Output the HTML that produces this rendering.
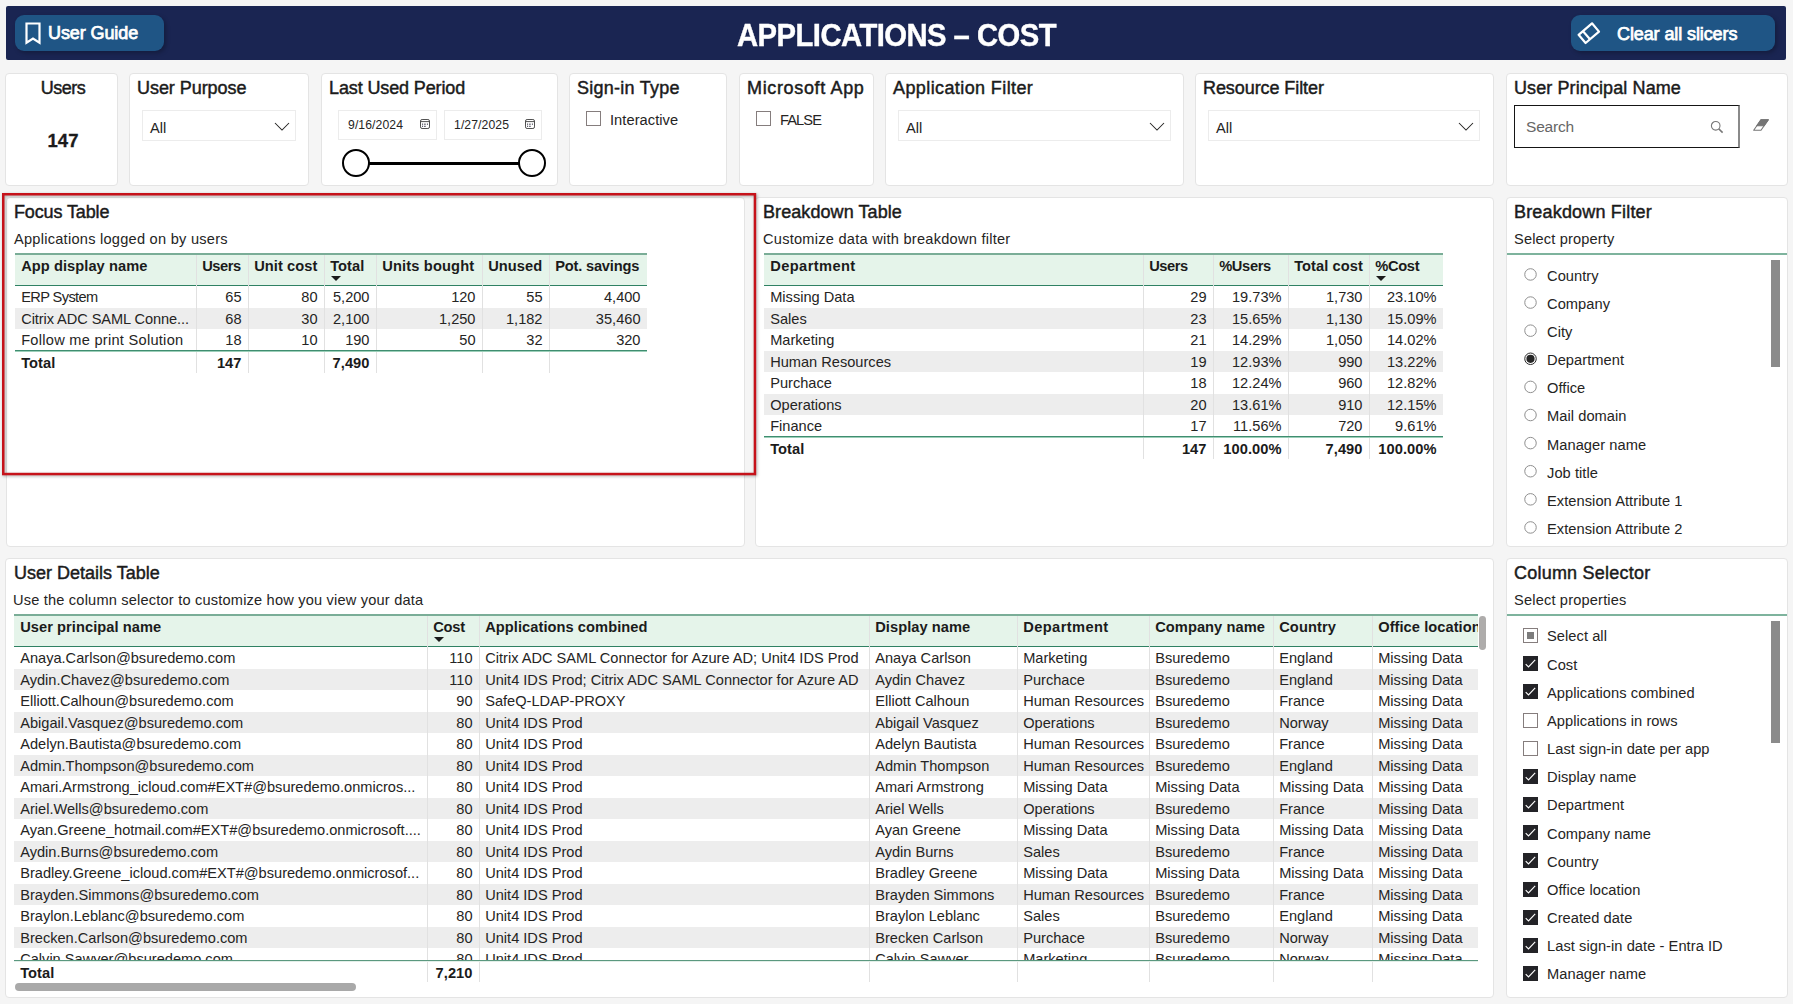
<!DOCTYPE html>
<html lang="en"><head><meta charset="utf-8"><title>Applications – Cost</title>
<style>
*{box-sizing:border-box;margin:0;padding:0}
html,body{width:1793px;height:1004px;overflow:hidden;background:#f5f5f5;font-family:"Liberation Sans",sans-serif;color:#252423}
.abs{position:absolute}
.card{position:absolute;background:#fff;border:1px solid #e4e4e4;border-radius:4px}
.hdr{position:absolute;left:6px;top:6px;width:1780px;height:54px;background:#1a2552;border-radius:2px}
.btn{position:absolute;top:15px;height:36px;background:#1f5585;border-radius:9px;box-shadow:2px 2px 4px rgba(0,0,0,.25);color:#fff}
.ttl{position:absolute;font-size:18px;color:#1b1b1b;white-space:nowrap;-webkit-text-stroke:.45px #1b1b1b;letter-spacing:.05px}
.sub{position:absolute;font-size:14.6px;color:#252423;white-space:nowrap;letter-spacing:.15px}
.dd{position:absolute;border:1px solid #ececec;background:#fff;height:31px}
.dd span{position:absolute;left:7px;top:9px;font-size:14.6px;color:#252423}
.t{position:absolute;white-space:nowrap;overflow:hidden}
.row{position:absolute;left:0;height:21.43px;font-size:14.6px;letter-spacing:0;color:#252423}
.row.alt{background:#ededed}
.c{position:absolute;top:0;height:100%;white-space:nowrap;overflow:hidden;padding:0 6.5px 0 6.2px}
.r{text-align:right}
.th{position:absolute;background:#e5f4ea;border-top:2px solid #7aad97;border-bottom:1px solid #2f8163;font-weight:bold;font-size:14.67px;letter-spacing:.05px;color:#1b1b1b}
.th .c{line-height:19.4px;top:2px}
.vl{position:absolute;width:1px;background:#e1e1e1}
.tot{position:absolute;font-weight:bold;font-size:14.67px;letter-spacing:.05px;border-top:1px solid #3f8d70;box-shadow:inset 0 1px 0 #9ccfb9;color:#1b1b1b}
.tot .c{line-height:24px}
.arr{position:absolute;width:0;height:0;border-left:5px solid transparent;border-right:5px solid transparent;border-top:5px solid #1b1b1b}
.li{position:absolute;font-size:14.67px;line-height:17px;letter-spacing:.05px;color:#252423;white-space:nowrap}
.rad{position:absolute;width:12px;height:12px;border:1px solid #8a8a8a;border-radius:50%;background:#fff}
.rad.on::after{content:"";position:absolute;left:2px;top:2px;width:6px;height:6px;border-radius:50%;background:#1b1b1b}
.rad.on{border-color:#1b1b1b}
.cb{position:absolute;width:15px;height:15px;border:1px solid #857d7d;background:#fff}
.cb.on{background:#232327;border-color:#232327}
.sb{position:absolute;background:#8b8b8b}
</style></head>
<body>
<div class="hdr"></div>
<div class="btn" style="left:15px;width:149px"></div>
<svg class="abs" style="left:24px;top:21px" width="18" height="25" viewBox="0 0 18 25"><path d="M2.5 2.5 H15.5 V21.7 L9 17.6 L2.5 21.7 Z" fill="none" stroke="#fff" stroke-width="2.2"/></svg>
<div class="abs" style="left:48px;top:23px;font-size:18px;color:#fff;-webkit-text-stroke:.75px #fff;letter-spacing:-.1px;white-space:nowrap">User Guide</div>
<div class="abs" style="left:697px;top:17px;width:399px;text-align:center;font-size:31.8px;font-weight:bold;color:#fff;white-space:nowrap;letter-spacing:-.6px;transform:scaleX(.92);-webkit-text-stroke:.4px #fff">APPLICATIONS – COST</div>
<div class="btn" style="left:1571px;width:204px"></div>
<svg class="abs" style="left:1577px;top:21px" width="24" height="24" viewBox="0 0 24 24"><g fill="none" stroke="#fff" stroke-width="2.2" stroke-linejoin="round"><path d="M15 2.3 L22 10.6 L8.6 22 L1.6 13.8 Z"/><path d="M6 10.2 L13 18.3"/></g></svg>
<div class="abs" style="left:1617px;top:24px;font-size:18px;color:#fff;-webkit-text-stroke:.75px #fff;letter-spacing:-.1px;white-space:nowrap">Clear all slicers</div>
<div class="card" style="left:5px;top:73px;width:113px;height:113px"></div>
<div class="card" style="left:129px;top:73px;width:180px;height:113px"></div>
<div class="card" style="left:321px;top:73px;width:237px;height:113px"></div>
<div class="card" style="left:569px;top:73px;width:158px;height:113px"></div>
<div class="card" style="left:739px;top:73px;width:135px;height:113px"></div>
<div class="card" style="left:885px;top:73px;width:299px;height:113px"></div>
<div class="card" style="left:1195px;top:73px;width:299px;height:113px"></div>
<div class="card" style="left:1506px;top:73px;width:282px;height:113px"></div>
<div class="ttl" style="left:7px;width:112px;text-align:center;top:78px;letter-spacing:-.5px">Users</div>
<div class="abs" style="left:7px;width:112px;text-align:center;top:130px;font-size:18.5px;font-weight:bold;color:#1b1b1b;-webkit-text-stroke:.3px #1b1b1b">147</div>
<div class="ttl" style="left:137px;top:78px;letter-spacing:-0.05px">User Purpose</div>
<div class="ttl" style="left:329px;top:78px;letter-spacing:-0.12px">Last Used Period</div>
<div class="ttl" style="left:577px;top:78px;letter-spacing:0.25px">Sign-in Type</div>
<div class="ttl" style="left:747px;top:78px;letter-spacing:0.65px">Microsoft App</div>
<div class="ttl" style="left:893px;top:78px;letter-spacing:0.4px">Application Filter</div>
<div class="ttl" style="left:1203px;top:78px;letter-spacing:-0.08px">Resource Filter</div>
<div class="ttl" style="left:1514px;top:78px;letter-spacing:0.1px">User Principal Name</div>
<div class="dd" style="left:142px;top:110px;width:154px"><span>All</span><svg class="abs" style="right:5px;top:11px" width="16" height="10" viewBox="0 0 16 10"><path d="M1 1 L8 8 L15 1" fill="none" stroke="#252423" stroke-width="1.05"/></svg></div>
<div class="dd" style="left:898px;top:110px;width:273px"><span>All</span><svg class="abs" style="right:5px;top:11px" width="16" height="10" viewBox="0 0 16 10"><path d="M1 1 L8 8 L15 1" fill="none" stroke="#252423" stroke-width="1.05"/></svg></div>
<div class="dd" style="left:1208px;top:110px;width:272px"><span>All</span><svg class="abs" style="right:5px;top:11px" width="16" height="10" viewBox="0 0 16 10"><path d="M1 1 L8 8 L15 1" fill="none" stroke="#252423" stroke-width="1.05"/></svg></div>
<div class="dd" style="left:338px;top:110px;width:99px;height:30px"><span style="left:9px;top:7px;font-size:12.2px;letter-spacing:.1px">9/16/2024</span><svg class="abs" style="right:6px;top:8px" width="10" height="10" viewBox="0 0 10 10"><g fill="none" stroke="#3d3d3d" stroke-width=".9"><rect x=".5" y=".5" width="9" height="9" rx="1.6"/><path d="M.5 2.6H9.5"/></g><g fill="#3a3a4a"><rect x="2" y="4.6" width="1.1" height="1.1"/><rect x="4" y="4.7" width="1.8" height=".9"/><rect x="6.9" y="4.6" width="1.1" height="1.1"/><rect x="2" y="6.7" width="1.1" height="1.1"/><rect x="4" y="6.8" width="1.8" height=".9"/></g></svg></div>
<div class="dd" style="left:444px;top:110px;width:98px;height:30px"><span style="left:9px;top:7px;font-size:12.2px;letter-spacing:.1px">1/27/2025</span><svg class="abs" style="right:6px;top:8px" width="10" height="10" viewBox="0 0 10 10"><g fill="none" stroke="#3d3d3d" stroke-width=".9"><rect x=".5" y=".5" width="9" height="9" rx="1.6"/><path d="M.5 2.6H9.5"/></g><g fill="#3a3a4a"><rect x="2" y="4.6" width="1.1" height="1.1"/><rect x="4" y="4.7" width="1.8" height=".9"/><rect x="6.9" y="4.6" width="1.1" height="1.1"/><rect x="2" y="6.7" width="1.1" height="1.1"/><rect x="4" y="6.8" width="1.8" height=".9"/></g></svg></div>
<div class="abs" style="left:356px;top:161.5px;width:176px;height:3px;background:#000"></div>
<div class="abs" style="left:341.5px;top:149px;width:28px;height:28px;border:2.5px solid #000;border-radius:50%;background:#fff"></div>
<div class="abs" style="left:517.5px;top:149px;width:28px;height:28px;border:2.5px solid #000;border-radius:50%;background:#fff"></div>
<div class="cb" style="left:586px;top:111px"></div><div class="li" style="left:610px;top:112px">Interactive</div>
<div class="cb" style="left:756px;top:111px"></div><div class="li" style="left:780px;top:112px;letter-spacing:-.9px">FALSE</div>
<div class="abs" style="left:1514px;top:105px;width:226px;height:43px;border:1px solid #151515;border-right:2px solid #8a8a8a;background:#fff"></div>
<div class="abs" style="left:1526px;top:118px;font-size:15.5px;color:#666;letter-spacing:-.2px">Search</div>
<svg class="abs" style="left:1710px;top:120px" width="14" height="14" viewBox="0 0 14 14"><g fill="none" stroke="#777" stroke-width="1.1"><circle cx="5.7" cy="5.8" r="4.3"/><path d="M8.8 8.9 L12.6 12.6" stroke-width="1.5"/></g></svg>
<svg class="abs" style="left:1752px;top:118px" width="18" height="14" viewBox="0 0 18 14"><path d="M9 1.8 H16.3 L9 12.2 H1.7 Z" fill="#fff" stroke="#757575" stroke-width="1.1" stroke-linejoin="round"/><path d="M9 1.8 H16.3 L12.1 7.8 H4.8 Z" fill="#757575" stroke="#757575" stroke-width="1.1" stroke-linejoin="round"/></svg>
<div class="card" style="left:6px;top:197px;width:739px;height:350px"></div>
<div class="card" style="left:755px;top:197px;width:739px;height:350px"></div>
<div class="card" style="left:1506px;top:197px;width:282px;height:350px"></div>
<svg class="abs" style="left:0;top:185px;filter:drop-shadow(1px 1.5px 1.5px rgba(0,0,0,.32))" width="770" height="300" viewBox="0 185 770 300"><rect x="3.25" y="194.25" width="751.7" height="279.8" fill="none" stroke="#c6121a" stroke-width="2.5"/></svg>
<div class="ttl" style="left:14px;top:202px;letter-spacing:-0.13px">Focus Table</div>
<div class="sub" style="left:14px;top:231px;letter-spacing:0.25px">Applications logged on by users</div>
<div class="th" style="left:15px;top:253px;width:632px;height:33px"><div class="c" style="left:0px;width:181px">App display name</div><div class="c" style="left:181px;width:52px;letter-spacing:-0.45px">Users</div><div class="c" style="left:233px;width:76px">Unit cost</div><div class="c" style="left:309px;width:52px">Total</div><div class="c" style="left:361px;width:106px;letter-spacing:0.15px">Units bought</div><div class="c" style="left:467px;width:67px">Unused</div><div class="c" style="left:534px;width:98px;letter-spacing:-0.2px">Pot. savings</div></div>
<div class="arr" style="left:331px;top:276px"></div>
<div class="abs" style="left:15px;top:286px;width:632px;height:64px;overflow:hidden"><div class="row" style="top:0px;width:632px;height:22px;line-height:23.4px"><div class="c" style="left:0px;width:181px;letter-spacing:-0.6px">ERP System</div><div class="c r" style="left:181px;width:52px">65</div><div class="c r" style="left:233px;width:76px">80</div><div class="c r" style="left:309px;width:52px">5,200</div><div class="c r" style="left:361px;width:106px">120</div><div class="c r" style="left:467px;width:67px">55</div><div class="c r" style="left:534px;width:98px">4,400</div></div><div class="row alt" style="top:22px;width:632px;height:21px;line-height:23.4px"><div class="c" style="left:0px;width:181px;letter-spacing:-0.08px">Citrix ADC SAML Conne...</div><div class="c r" style="left:181px;width:52px">68</div><div class="c r" style="left:233px;width:76px">30</div><div class="c r" style="left:309px;width:52px">2,100</div><div class="c r" style="left:361px;width:106px">1,250</div><div class="c r" style="left:467px;width:67px">1,182</div><div class="c r" style="left:534px;width:98px">35,460</div></div><div class="row" style="top:43px;width:632px;height:22px;line-height:23.4px"><div class="c" style="left:0px;width:181px;letter-spacing:0.27px">Follow me print Solution</div><div class="c r" style="left:181px;width:52px">18</div><div class="c r" style="left:233px;width:76px">10</div><div class="c r" style="left:309px;width:52px">190</div><div class="c r" style="left:361px;width:106px">50</div><div class="c r" style="left:467px;width:67px">32</div><div class="c r" style="left:534px;width:98px">320</div></div></div>
<div class="vl" style="left:196px;top:255px;height:117.80px"></div>
<div class="vl" style="left:248px;top:255px;height:117.80px"></div>
<div class="vl" style="left:324px;top:255px;height:117.80px"></div>
<div class="vl" style="left:376px;top:255px;height:117.80px"></div>
<div class="vl" style="left:482px;top:255px;height:117.80px"></div>
<div class="vl" style="left:549px;top:255px;height:117.80px"></div>
<div class="tot" style="left:15px;top:350.00px;width:632px;height:23px"><div class="c" style="left:0px;width:181px">Total</div><div class="c r" style="left:181px;width:52px">147</div><div class="c r" style="left:233px;width:76px"></div><div class="c r" style="left:309px;width:52px">7,490</div><div class="c r" style="left:361px;width:106px"></div><div class="c r" style="left:467px;width:67px"></div><div class="c r" style="left:534px;width:98px"></div></div>
<div class="ttl" style="left:763px;top:202px;letter-spacing:0.08px">Breakdown Table</div>
<div class="sub" style="left:763px;top:231px;letter-spacing:0.25px">Customize data with breakdown filter</div>
<div class="th" style="left:764px;top:253px;width:679px;height:33px"><div class="c" style="left:0px;width:379px;letter-spacing:0.4px">Department</div><div class="c" style="left:379px;width:70px;letter-spacing:-0.45px">Users</div><div class="c" style="left:449px;width:75px;letter-spacing:-0.35px">%Users</div><div class="c" style="left:524px;width:81px">Total cost</div><div class="c" style="left:605px;width:74px;letter-spacing:-0.3px">%Cost</div></div>
<div class="arr" style="left:1376px;top:276px"></div>
<div class="abs" style="left:764px;top:286px;width:679px;height:150px;overflow:hidden"><div class="row" style="top:0px;width:679px;height:22px;line-height:23.4px"><div class="c" style="left:0px;width:379px">Missing Data</div><div class="c r" style="left:379px;width:70px">29</div><div class="c r" style="left:449px;width:75px">19.73%</div><div class="c r" style="left:524px;width:81px">1,730</div><div class="c r" style="left:605px;width:74px">23.10%</div></div><div class="row alt" style="top:22px;width:679px;height:21px;line-height:23.4px"><div class="c" style="left:0px;width:379px">Sales</div><div class="c r" style="left:379px;width:70px">23</div><div class="c r" style="left:449px;width:75px">15.65%</div><div class="c r" style="left:524px;width:81px">1,130</div><div class="c r" style="left:605px;width:74px">15.09%</div></div><div class="row" style="top:43px;width:679px;height:22px;line-height:23.4px"><div class="c" style="left:0px;width:379px">Marketing</div><div class="c r" style="left:379px;width:70px">21</div><div class="c r" style="left:449px;width:75px">14.29%</div><div class="c r" style="left:524px;width:81px">1,050</div><div class="c r" style="left:605px;width:74px">14.02%</div></div><div class="row alt" style="top:65px;width:679px;height:21px;line-height:23.4px"><div class="c" style="left:0px;width:379px">Human Resources</div><div class="c r" style="left:379px;width:70px">19</div><div class="c r" style="left:449px;width:75px">12.93%</div><div class="c r" style="left:524px;width:81px">990</div><div class="c r" style="left:605px;width:74px">13.22%</div></div><div class="row" style="top:86px;width:679px;height:22px;line-height:23.4px"><div class="c" style="left:0px;width:379px">Purchace</div><div class="c r" style="left:379px;width:70px">18</div><div class="c r" style="left:449px;width:75px">12.24%</div><div class="c r" style="left:524px;width:81px">960</div><div class="c r" style="left:605px;width:74px">12.82%</div></div><div class="row alt" style="top:108px;width:679px;height:21px;line-height:23.4px"><div class="c" style="left:0px;width:379px">Operations</div><div class="c r" style="left:379px;width:70px">20</div><div class="c r" style="left:449px;width:75px">13.61%</div><div class="c r" style="left:524px;width:81px">910</div><div class="c r" style="left:605px;width:74px">12.15%</div></div><div class="row" style="top:129px;width:679px;height:22px;line-height:23.4px"><div class="c" style="left:0px;width:379px">Finance</div><div class="c r" style="left:379px;width:70px">17</div><div class="c r" style="left:449px;width:75px">11.56%</div><div class="c r" style="left:524px;width:81px">720</div><div class="c r" style="left:605px;width:74px">9.61%</div></div></div>
<div class="vl" style="left:1143px;top:255px;height:203.80px"></div>
<div class="vl" style="left:1213px;top:255px;height:203.80px"></div>
<div class="vl" style="left:1288px;top:255px;height:203.80px"></div>
<div class="vl" style="left:1369px;top:255px;height:203.80px"></div>
<div class="tot" style="left:764px;top:436.00px;width:679px;height:23px"><div class="c" style="left:0px;width:379px">Total</div><div class="c r" style="left:379px;width:70px">147</div><div class="c r" style="left:449px;width:75px">100.00%</div><div class="c r" style="left:524px;width:81px">7,490</div><div class="c r" style="left:605px;width:74px">100.00%</div></div>
<div class="ttl" style="left:1514px;top:202px;letter-spacing:0.18px">Breakdown Filter</div>
<div class="sub" style="left:1514px;top:231px;letter-spacing:0.15px">Select property</div>
<div class="abs" style="left:1507px;top:253px;width:280px;height:2px;background:#7eb39d"></div>
<svg class="abs" style="left:1522px;top:266px" width="17" height="18" viewBox="0 0 17 18"><circle cx="8.5" cy="8.45" r="5.75" fill="#fff" stroke="#8f8f8f" stroke-width="1"/></svg><div class="li" style="left:1547px;top:267.85px">Country</div>
<svg class="abs" style="left:1522px;top:294px" width="17" height="18" viewBox="0 0 17 18"><circle cx="8.5" cy="8.56" r="5.75" fill="#fff" stroke="#8f8f8f" stroke-width="1"/></svg><div class="li" style="left:1547px;top:295.96px">Company</div>
<svg class="abs" style="left:1522px;top:322px" width="17" height="18" viewBox="0 0 17 18"><circle cx="8.5" cy="8.67" r="5.75" fill="#fff" stroke="#8f8f8f" stroke-width="1"/></svg><div class="li" style="left:1547px;top:324.07px">City</div>
<svg class="abs" style="left:1522px;top:350px" width="17" height="18" viewBox="0 0 17 18"><circle cx="8.5" cy="8.78" r="5.75" fill="#fff" stroke="#2b2b2b" stroke-width="1"/><circle cx="8.5" cy="8.78" r="4.1" fill="#262626"/></svg><div class="li" style="left:1547px;top:352.18px">Department</div>
<svg class="abs" style="left:1522px;top:378px" width="17" height="18" viewBox="0 0 17 18"><circle cx="8.5" cy="8.89" r="5.75" fill="#fff" stroke="#8f8f8f" stroke-width="1"/></svg><div class="li" style="left:1547px;top:380.29px">Office</div>
<svg class="abs" style="left:1522px;top:407px" width="17" height="18" viewBox="0 0 17 18"><circle cx="8.5" cy="8.00" r="5.75" fill="#fff" stroke="#8f8f8f" stroke-width="1"/></svg><div class="li" style="left:1547px;top:408.40px">Mail domain</div>
<svg class="abs" style="left:1522px;top:435px" width="17" height="18" viewBox="0 0 17 18"><circle cx="8.5" cy="8.11" r="5.75" fill="#fff" stroke="#8f8f8f" stroke-width="1"/></svg><div class="li" style="left:1547px;top:436.51px">Manager name</div>
<svg class="abs" style="left:1522px;top:463px" width="17" height="18" viewBox="0 0 17 18"><circle cx="8.5" cy="8.22" r="5.75" fill="#fff" stroke="#8f8f8f" stroke-width="1"/></svg><div class="li" style="left:1547px;top:464.62px">Job title</div>
<svg class="abs" style="left:1522px;top:491px" width="17" height="18" viewBox="0 0 17 18"><circle cx="8.5" cy="8.33" r="5.75" fill="#fff" stroke="#8f8f8f" stroke-width="1"/></svg><div class="li" style="left:1547px;top:492.73px">Extension Attribute 1</div>
<svg class="abs" style="left:1522px;top:519px" width="17" height="18" viewBox="0 0 17 18"><circle cx="8.5" cy="8.44" r="5.75" fill="#fff" stroke="#8f8f8f" stroke-width="1"/></svg><div class="li" style="left:1547px;top:520.84px">Extension Attribute 2</div>
<div class="sb" style="left:1771px;top:260px;width:9px;height:107px"></div>
<div class="card" style="left:5px;top:558px;width:1489px;height:440px"></div>
<div class="card" style="left:1506px;top:558px;width:282px;height:440px"></div>
<div class="ttl" style="left:14px;top:563px;letter-spacing:0px">User Details Table</div>
<div class="sub" style="left:13px;top:592px;letter-spacing:0.19px">Use the column selector to customize how you view your data</div>
<div class="th" style="left:14px;top:614px;width:1464px;height:33px"><div class="c" style="left:0px;width:413px">User principal name</div><div class="c" style="left:413px;width:52px;letter-spacing:-0.2px">Cost</div><div class="c" style="left:465px;width:390px">Applications combined</div><div class="c" style="left:855px;width:148px">Display name</div><div class="c" style="left:1003px;width:132px;letter-spacing:0.4px">Department</div><div class="c" style="left:1135px;width:124px">Company name</div><div class="c" style="left:1259px;width:99px;letter-spacing:0.1px">Country</div><div class="c" style="left:1358px;width:106px">Office location</div></div>
<div class="arr" style="left:434px;top:637px"></div>
<div class="abs" style="left:14px;top:647px;width:1464px;height:313px;overflow:hidden"><div class="row" style="top:0px;width:1464px;height:22px;line-height:23.4px"><div class="c" style="left:0px;width:413px">Anaya.Carlson@bsuredemo.com</div><div class="c r" style="left:413px;width:52px">110</div><div class="c" style="left:465px;width:390px">Citrix ADC SAML Connector for Azure AD; Unit4 IDS Prod</div><div class="c" style="left:855px;width:148px">Anaya Carlson</div><div class="c" style="left:1003px;width:132px">Marketing</div><div class="c" style="left:1135px;width:124px">Bsuredemo</div><div class="c" style="left:1259px;width:99px">England</div><div class="c" style="left:1358px;width:106px">Missing Data</div></div><div class="row alt" style="top:22px;width:1464px;height:21px;line-height:23.4px"><div class="c" style="left:0px;width:413px">Aydin.Chavez@bsuredemo.com</div><div class="c r" style="left:413px;width:52px">110</div><div class="c" style="left:465px;width:390px">Unit4 IDS Prod; Citrix ADC SAML Connector for Azure AD</div><div class="c" style="left:855px;width:148px">Aydin Chavez</div><div class="c" style="left:1003px;width:132px">Purchace</div><div class="c" style="left:1135px;width:124px">Bsuredemo</div><div class="c" style="left:1259px;width:99px">England</div><div class="c" style="left:1358px;width:106px">Missing Data</div></div><div class="row" style="top:43px;width:1464px;height:22px;line-height:23.4px"><div class="c" style="left:0px;width:413px">Elliott.Calhoun@bsuredemo.com</div><div class="c r" style="left:413px;width:52px">90</div><div class="c" style="left:465px;width:390px">SafeQ-LDAP-PROXY</div><div class="c" style="left:855px;width:148px">Elliott Calhoun</div><div class="c" style="left:1003px;width:132px">Human Resources</div><div class="c" style="left:1135px;width:124px">Bsuredemo</div><div class="c" style="left:1259px;width:99px">France</div><div class="c" style="left:1358px;width:106px">Missing Data</div></div><div class="row alt" style="top:65px;width:1464px;height:21px;line-height:23.4px"><div class="c" style="left:0px;width:413px">Abigail.Vasquez@bsuredemo.com</div><div class="c r" style="left:413px;width:52px">80</div><div class="c" style="left:465px;width:390px">Unit4 IDS Prod</div><div class="c" style="left:855px;width:148px">Abigail Vasquez</div><div class="c" style="left:1003px;width:132px">Operations</div><div class="c" style="left:1135px;width:124px">Bsuredemo</div><div class="c" style="left:1259px;width:99px">Norway</div><div class="c" style="left:1358px;width:106px">Missing Data</div></div><div class="row" style="top:86px;width:1464px;height:22px;line-height:23.4px"><div class="c" style="left:0px;width:413px">Adelyn.Bautista@bsuredemo.com</div><div class="c r" style="left:413px;width:52px">80</div><div class="c" style="left:465px;width:390px">Unit4 IDS Prod</div><div class="c" style="left:855px;width:148px">Adelyn Bautista</div><div class="c" style="left:1003px;width:132px">Human Resources</div><div class="c" style="left:1135px;width:124px">Bsuredemo</div><div class="c" style="left:1259px;width:99px">France</div><div class="c" style="left:1358px;width:106px">Missing Data</div></div><div class="row alt" style="top:108px;width:1464px;height:21px;line-height:23.4px"><div class="c" style="left:0px;width:413px">Admin.Thompson@bsuredemo.com</div><div class="c r" style="left:413px;width:52px">80</div><div class="c" style="left:465px;width:390px">Unit4 IDS Prod</div><div class="c" style="left:855px;width:148px">Admin Thompson</div><div class="c" style="left:1003px;width:132px">Human Resources</div><div class="c" style="left:1135px;width:124px">Bsuredemo</div><div class="c" style="left:1259px;width:99px">England</div><div class="c" style="left:1358px;width:106px">Missing Data</div></div><div class="row" style="top:129px;width:1464px;height:22px;line-height:23.4px"><div class="c" style="left:0px;width:413px">Amari.Armstrong_icloud.com#EXT#@bsuredemo.onmicros...</div><div class="c r" style="left:413px;width:52px">80</div><div class="c" style="left:465px;width:390px">Unit4 IDS Prod</div><div class="c" style="left:855px;width:148px">Amari Armstrong</div><div class="c" style="left:1003px;width:132px">Missing Data</div><div class="c" style="left:1135px;width:124px">Missing Data</div><div class="c" style="left:1259px;width:99px">Missing Data</div><div class="c" style="left:1358px;width:106px">Missing Data</div></div><div class="row alt" style="top:151px;width:1464px;height:21px;line-height:23.4px"><div class="c" style="left:0px;width:413px">Ariel.Wells@bsuredemo.com</div><div class="c r" style="left:413px;width:52px">80</div><div class="c" style="left:465px;width:390px">Unit4 IDS Prod</div><div class="c" style="left:855px;width:148px">Ariel Wells</div><div class="c" style="left:1003px;width:132px">Operations</div><div class="c" style="left:1135px;width:124px">Bsuredemo</div><div class="c" style="left:1259px;width:99px">France</div><div class="c" style="left:1358px;width:106px">Missing Data</div></div><div class="row" style="top:172px;width:1464px;height:22px;line-height:23.4px"><div class="c" style="left:0px;width:413px">Ayan.Greene_hotmail.com#EXT#@bsuredemo.onmicrosoft....</div><div class="c r" style="left:413px;width:52px">80</div><div class="c" style="left:465px;width:390px">Unit4 IDS Prod</div><div class="c" style="left:855px;width:148px">Ayan Greene</div><div class="c" style="left:1003px;width:132px">Missing Data</div><div class="c" style="left:1135px;width:124px">Missing Data</div><div class="c" style="left:1259px;width:99px">Missing Data</div><div class="c" style="left:1358px;width:106px">Missing Data</div></div><div class="row alt" style="top:194px;width:1464px;height:21px;line-height:23.4px"><div class="c" style="left:0px;width:413px">Aydin.Burns@bsuredemo.com</div><div class="c r" style="left:413px;width:52px">80</div><div class="c" style="left:465px;width:390px">Unit4 IDS Prod</div><div class="c" style="left:855px;width:148px">Aydin Burns</div><div class="c" style="left:1003px;width:132px">Sales</div><div class="c" style="left:1135px;width:124px">Bsuredemo</div><div class="c" style="left:1259px;width:99px">France</div><div class="c" style="left:1358px;width:106px">Missing Data</div></div><div class="row" style="top:215px;width:1464px;height:22px;line-height:23.4px"><div class="c" style="left:0px;width:413px">Bradley.Greene_icloud.com#EXT#@bsuredemo.onmicrosof...</div><div class="c r" style="left:413px;width:52px">80</div><div class="c" style="left:465px;width:390px">Unit4 IDS Prod</div><div class="c" style="left:855px;width:148px">Bradley Greene</div><div class="c" style="left:1003px;width:132px">Missing Data</div><div class="c" style="left:1135px;width:124px">Missing Data</div><div class="c" style="left:1259px;width:99px">Missing Data</div><div class="c" style="left:1358px;width:106px">Missing Data</div></div><div class="row alt" style="top:237px;width:1464px;height:21px;line-height:23.4px"><div class="c" style="left:0px;width:413px">Brayden.Simmons@bsuredemo.com</div><div class="c r" style="left:413px;width:52px">80</div><div class="c" style="left:465px;width:390px">Unit4 IDS Prod</div><div class="c" style="left:855px;width:148px">Brayden Simmons</div><div class="c" style="left:1003px;width:132px">Human Resources</div><div class="c" style="left:1135px;width:124px">Bsuredemo</div><div class="c" style="left:1259px;width:99px">France</div><div class="c" style="left:1358px;width:106px">Missing Data</div></div><div class="row" style="top:258px;width:1464px;height:22px;line-height:23.4px"><div class="c" style="left:0px;width:413px">Braylon.Leblanc@bsuredemo.com</div><div class="c r" style="left:413px;width:52px">80</div><div class="c" style="left:465px;width:390px">Unit4 IDS Prod</div><div class="c" style="left:855px;width:148px">Braylon Leblanc</div><div class="c" style="left:1003px;width:132px">Sales</div><div class="c" style="left:1135px;width:124px">Bsuredemo</div><div class="c" style="left:1259px;width:99px">England</div><div class="c" style="left:1358px;width:106px">Missing Data</div></div><div class="row alt" style="top:280px;width:1464px;height:21px;line-height:23.4px"><div class="c" style="left:0px;width:413px">Brecken.Carlson@bsuredemo.com</div><div class="c r" style="left:413px;width:52px">80</div><div class="c" style="left:465px;width:390px">Unit4 IDS Prod</div><div class="c" style="left:855px;width:148px">Brecken Carlson</div><div class="c" style="left:1003px;width:132px">Purchace</div><div class="c" style="left:1135px;width:124px">Bsuredemo</div><div class="c" style="left:1259px;width:99px">Norway</div><div class="c" style="left:1358px;width:106px">Missing Data</div></div><div class="row" style="top:301px;width:1464px;height:22px;line-height:23.4px"><div class="c" style="left:0px;width:413px">Calvin.Sawyer@bsuredemo.com</div><div class="c r" style="left:413px;width:52px">80</div><div class="c" style="left:465px;width:390px">Unit4 IDS Prod</div><div class="c" style="left:855px;width:148px">Calvin Sawyer</div><div class="c" style="left:1003px;width:132px">Marketing</div><div class="c" style="left:1135px;width:124px">Bsuredemo</div><div class="c" style="left:1259px;width:99px">Norway</div><div class="c" style="left:1358px;width:106px">Missing Data</div></div></div>
<div class="vl" style="left:427px;top:616px;height:366.00px"></div>
<div class="vl" style="left:479px;top:616px;height:366.00px"></div>
<div class="vl" style="left:869px;top:616px;height:366.00px"></div>
<div class="vl" style="left:1017px;top:616px;height:366.00px"></div>
<div class="vl" style="left:1149px;top:616px;height:366.00px"></div>
<div class="vl" style="left:1273px;top:616px;height:366.00px"></div>
<div class="vl" style="left:1372px;top:616px;height:366.00px"></div>
<div class="tot" style="left:14px;top:960.00px;width:1464px;height:23px;border-top-color:#5b987f;box-shadow:inset 0 1px 0 #e3efe9"><div class="c" style="left:0px;width:413px">Total</div><div class="c r" style="left:413px;width:52px">7,210</div><div class="c" style="left:465px;width:390px"></div><div class="c" style="left:855px;width:148px"></div><div class="c" style="left:1003px;width:132px"></div><div class="c" style="left:1135px;width:124px"></div><div class="c" style="left:1259px;width:99px"></div><div class="c" style="left:1358px;width:106px"></div></div>
<div class="sb" style="left:1479.3px;top:615.5px;width:6.8px;height:34.6px;border-radius:3.4px;background:#aeacab"></div>
<div class="sb" style="left:15px;top:983px;width:341px;height:8px;border-radius:4px;background:#a9a9a9"></div>
<div class="ttl" style="left:1514px;top:563px;letter-spacing:0.22px">Column Selector</div>
<div class="sub" style="left:1514px;top:592px;letter-spacing:0.18px">Select properties</div>
<div class="abs" style="left:1507px;top:614px;width:280px;height:2px;background:#7eb39d"></div>
<div class="cb" style="left:1523px;top:628px"><div style="position:absolute;left:3px;top:3px;width:7px;height:7px;background:#7d7d7d"></div></div><div class="li" style="left:1547px;top:628.45px">Select all</div>
<div class="cb on" style="left:1523px;top:656px"><svg width="15" height="15" viewBox="0 0 15 15" style="position:absolute;left:-1px;top:-1px"><path d="M2.7 8.2 L5.5 10.9 L12.2 3.9" fill="none" stroke="#fff" stroke-width="1.15"/></svg></div><div class="li" style="left:1547px;top:656.61px">Cost</div>
<div class="cb on" style="left:1523px;top:684px"><svg width="15" height="15" viewBox="0 0 15 15" style="position:absolute;left:-1px;top:-1px"><path d="M2.7 8.2 L5.5 10.9 L12.2 3.9" fill="none" stroke="#fff" stroke-width="1.15"/></svg></div><div class="li" style="left:1547px;top:684.77px">Applications combined</div>
<div class="cb" style="left:1523px;top:713px"></div><div class="li" style="left:1547px;top:712.93px">Applications in rows</div>
<div class="cb" style="left:1523px;top:741px"></div><div class="li" style="left:1547px;top:741.09px">Last sign-in date per app</div>
<div class="cb on" style="left:1523px;top:769px"><svg width="15" height="15" viewBox="0 0 15 15" style="position:absolute;left:-1px;top:-1px"><path d="M2.7 8.2 L5.5 10.9 L12.2 3.9" fill="none" stroke="#fff" stroke-width="1.15"/></svg></div><div class="li" style="left:1547px;top:769.25px">Display name</div>
<div class="cb on" style="left:1523px;top:797px"><svg width="15" height="15" viewBox="0 0 15 15" style="position:absolute;left:-1px;top:-1px"><path d="M2.7 8.2 L5.5 10.9 L12.2 3.9" fill="none" stroke="#fff" stroke-width="1.15"/></svg></div><div class="li" style="left:1547px;top:797.41px">Department</div>
<div class="cb on" style="left:1523px;top:825px"><svg width="15" height="15" viewBox="0 0 15 15" style="position:absolute;left:-1px;top:-1px"><path d="M2.7 8.2 L5.5 10.9 L12.2 3.9" fill="none" stroke="#fff" stroke-width="1.15"/></svg></div><div class="li" style="left:1547px;top:825.57px">Company name</div>
<div class="cb on" style="left:1523px;top:853px"><svg width="15" height="15" viewBox="0 0 15 15" style="position:absolute;left:-1px;top:-1px"><path d="M2.7 8.2 L5.5 10.9 L12.2 3.9" fill="none" stroke="#fff" stroke-width="1.15"/></svg></div><div class="li" style="left:1547px;top:853.73px">Country</div>
<div class="cb on" style="left:1523px;top:882px"><svg width="15" height="15" viewBox="0 0 15 15" style="position:absolute;left:-1px;top:-1px"><path d="M2.7 8.2 L5.5 10.9 L12.2 3.9" fill="none" stroke="#fff" stroke-width="1.15"/></svg></div><div class="li" style="left:1547px;top:881.89px">Office location</div>
<div class="cb on" style="left:1523px;top:910px"><svg width="15" height="15" viewBox="0 0 15 15" style="position:absolute;left:-1px;top:-1px"><path d="M2.7 8.2 L5.5 10.9 L12.2 3.9" fill="none" stroke="#fff" stroke-width="1.15"/></svg></div><div class="li" style="left:1547px;top:910.05px">Created date</div>
<div class="cb on" style="left:1523px;top:938px"><svg width="15" height="15" viewBox="0 0 15 15" style="position:absolute;left:-1px;top:-1px"><path d="M2.7 8.2 L5.5 10.9 L12.2 3.9" fill="none" stroke="#fff" stroke-width="1.15"/></svg></div><div class="li" style="left:1547px;top:938.21px">Last sign-in date - Entra ID</div>
<div class="cb on" style="left:1523px;top:966px"><svg width="15" height="15" viewBox="0 0 15 15" style="position:absolute;left:-1px;top:-1px"><path d="M2.7 8.2 L5.5 10.9 L12.2 3.9" fill="none" stroke="#fff" stroke-width="1.15"/></svg></div><div class="li" style="left:1547px;top:966.37px">Manager name</div>
<div class="sb" style="left:1771px;top:621px;width:9px;height:122px"></div>
</body></html>
